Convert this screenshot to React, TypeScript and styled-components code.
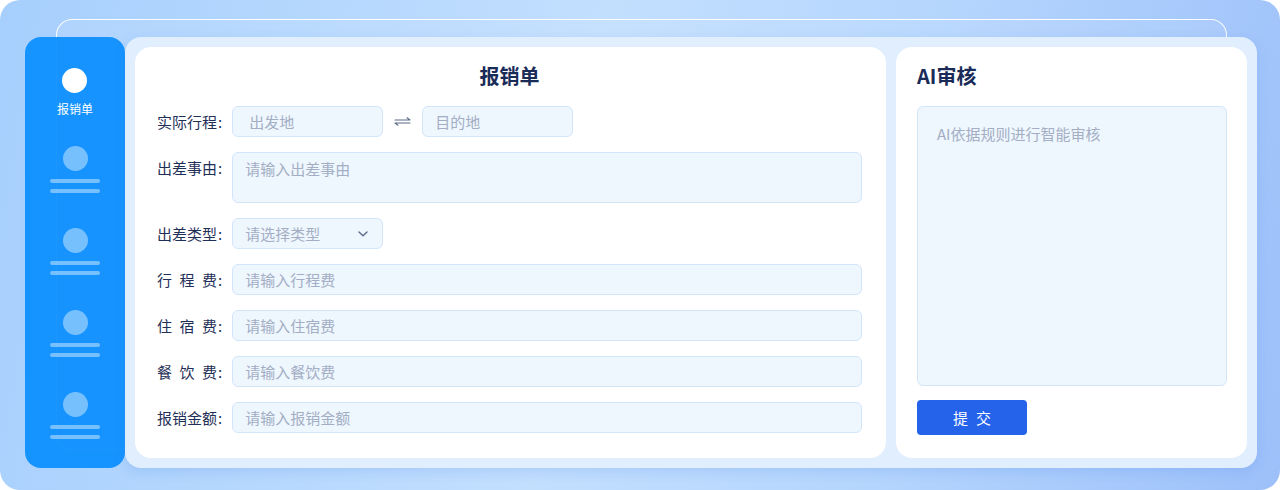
import styled, { createGlobalStyle } from "styled-components";

const GlobalStyle = createGlobalStyle`
  html, body {
    margin: 0;
    padding: 0;
    background: #ffffff;
  }
  * {
    box-sizing: border-box;
  }
  body {
    font-family: "Noto Sans CJK SC", "Noto Sans", "Liberation Sans", sans-serif;
  }
`;

const Frame = styled.div`
  position: relative;
  width: 1280px;
  height: 490px;
  border-radius: 20px;
  overflow: hidden;
  background: linear-gradient(100deg, #a7cffd 0%, #c2dffe 45%, #b4d5fd 70%, #9dc0fa 100%);
  display: flex;
  padding: 37px 23px 22px 25px;
`;

// decorative outline of a card stacked behind the main one
const GhostCard = styled.div`
  position: absolute;
  left: 56px;
  top: 19px;
  width: 1171px;
  height: 431px;
  border: 1.5px solid rgba(255, 255, 255, 0.95);
  border-radius: 16px;
  background: rgba(255, 255, 255, 0.08);
  z-index: 0;
`;

const Sidebar = styled.nav`
  position: relative;
  z-index: 1;
  flex: 0 0 100px;
  height: 431px;
  border-radius: 16px;
  background: rgba(10, 142, 254, 0.93);
  display: flex;
  flex-direction: column;
  align-items: center;
  padding-top: 31px;
`;

const NavItem = styled.div<{ $active?: boolean }>`
  display: flex;
  flex-direction: column;
  align-items: center;
  margin-bottom: ${({ $active }) => ($active ? "29px" : "35px")};
`;

const NavDot = styled.div<{ $active?: boolean }>`
  width: 25px;
  height: 25px;
  border-radius: 50%;
  background: ${({ $active }) => ($active ? "#ffffff" : "rgba(255, 255, 255, 0.42)")};
`;

const NavLabel = styled.span`
  margin-top: 7px;
  font-size: 12px;
  line-height: 17px;
  color: #ffffff;
`;

const NavBars = styled.div`
  margin-top: 8px;
  display: flex;
  flex-direction: column;
  gap: 6px;
`;

const NavBar = styled.div`
  width: 50px;
  height: 4px;
  border-radius: 2px;
  background: rgba(255, 255, 255, 0.42);
`;

const MainCard = styled.main`
  position: relative;
  z-index: 2;
  flex: 1;
  height: 431px;
  border-radius: 16px;
  background: #e1eefd;
  padding: 10px;
  display: flex;
  gap: 10px;
  box-shadow: 0 4px 12px rgba(70, 130, 230, 0.18);
`;

const Panel = styled.section<{ $wide?: boolean }>`
  flex: ${({ $wide }) => ($wide ? "0 0 751px" : "1")};
  background: #ffffff;
  border-radius: 16px;
  padding: ${({ $wide }) => ($wide ? "15px 24px 0 22px" : "15px 20px 0 21px")};
  display: flex;
  flex-direction: column;
`;

const PanelTitle = styled.h2<{ $center?: boolean }>`
  margin: 0 0 16px;
  font-size: 20px;
  line-height: 28px;
  font-weight: 700;
  color: #1a2b58;
  text-align: ${({ $center }) => ($center ? "center" : "left")};
`;

const Form = styled.div`
  display: flex;
  flex-direction: column;
  gap: 15px;
`;

const Row = styled.div<{ $top?: boolean }>`
  display: flex;
  align-items: ${({ $top }) => ($top ? "flex-start" : "center")};
`;

const Label = styled.div`
  flex: 0 0 65px;
  margin-right: 10px;
  display: flex;
  align-items: center;
  font-size: 15px;
  line-height: 31px;
  color: #1f2f57;
`;

const LabelChars = styled.span`
  width: 60px;
  display: flex;
  justify-content: space-between;
`;

const Colon = styled.span`
  margin-left: 1px;
`;

const Field = styled.div<{ $width?: number; $indent?: number; $tall?: boolean }>`
  ${({ $width }) => ($width ? `flex: 0 0 ${$width}px;` : "flex: 1;")}
  height: ${({ $tall }) => ($tall ? "51px" : "31px")};
  border: 1px solid #d3e5fb;
  border-radius: 6px;
  background: #eef6fe;
  padding: ${({ $tall }) => ($tall ? "5px" : "0")} 12px 0 ${({ $indent }) => $indent ?? 12}px;
  display: flex;
  align-items: ${({ $tall }) => ($tall ? "flex-start" : "center")};
  justify-content: space-between;
  font-size: 15px;
  line-height: 21px;
  color: #a3aec4;
`;

const SwapIcon = styled.svg`
  flex: none;
  margin: 0 11px;
`;

const Chevron = styled.svg`
  flex: none;
  margin-right: 2px;
`;

const ReviewBox = styled.div`
  height: 280px;
  border: 1px solid #d3e5fb;
  border-radius: 6px;
  background: #eef6fe;
  padding: 16px 19px;
  font-size: 15px;
  line-height: 21px;
  color: #a3aec4;
`;

const SubmitButton = styled.button`
  margin-top: 14px;
  width: 110px;
  height: 35px;
  border: none;
  border-radius: 4px;
  background: #2563eb;
  color: #ffffff;
  font-family: inherit;
  font-size: 15px;
  letter-spacing: 8px;
  padding: 0 0 0 8px;
  cursor: pointer;
`;

function FormLabel({ text }: { text: string }) {
  return (
    <Label>
      <LabelChars>
        {text.split("").map((ch, i) => (
          <span key={i}>{ch}</span>
        ))}
      </LabelChars>
      <Colon>:</Colon>
    </Label>
  );
}

const feeRows = [
  { label: "行程费", placeholder: "请输入行程费" },
  { label: "住宿费", placeholder: "请输入住宿费" },
  { label: "餐饮费", placeholder: "请输入餐饮费" },
  { label: "报销金额", placeholder: "请输入报销金额" },
];

export default function App() {
  return (
    <>
      <GlobalStyle />
      <Frame>
        <GhostCard />
        <Sidebar>
          <NavItem $active>
            <NavDot $active />
            <NavLabel>报销单</NavLabel>
          </NavItem>
          {[0, 1, 2, 3].map((i) => (
            <NavItem key={i}>
              <NavDot />
              <NavBars>
                <NavBar />
                <NavBar />
              </NavBars>
            </NavItem>
          ))}
        </Sidebar>

        <MainCard>
          <Panel $wide>
            <PanelTitle $center>报销单</PanelTitle>
            <Form>
              <Row>
                <FormLabel text="实际行程" />
                <Field $width={151} $indent={16}>出发地</Field>
                <SwapIcon width="17" height="9" viewBox="0 0 17 9" fill="none">
                  <path
                    d="M1 3H16L13 0.8M16 6H1L4 8.2"
                    stroke="#5a6a88"
                    strokeWidth="1.1"
                    strokeLinecap="round"
                    strokeLinejoin="round"
                  />
                </SwapIcon>
                <Field $width={151}>目的地</Field>
              </Row>
              <Row $top>
                <FormLabel text="出差事由" />
                <Field $tall>请输入出差事由</Field>
              </Row>
              <Row>
                <FormLabel text="出差类型" />
                <Field $width={151}>
                  请选择类型
                  <Chevron width="10" height="6" viewBox="0 0 10 6" fill="none">
                    <path
                      d="M1 1L5 4.8L9 1"
                      stroke="#5a6b8c"
                      strokeWidth="1.4"
                      strokeLinecap="round"
                      strokeLinejoin="round"
                    />
                  </Chevron>
                </Field>
              </Row>
              {feeRows.map((row) => (
                <Row key={row.label}>
                  <FormLabel text={row.label} />
                  <Field>{row.placeholder}</Field>
                </Row>
              ))}
            </Form>
          </Panel>

          <Panel>
            <PanelTitle>AI审核</PanelTitle>
            <ReviewBox>AI依据规则进行智能审核</ReviewBox>
            <SubmitButton>提交</SubmitButton>
          </Panel>
        </MainCard>
      </Frame>
    </>
  );
}
